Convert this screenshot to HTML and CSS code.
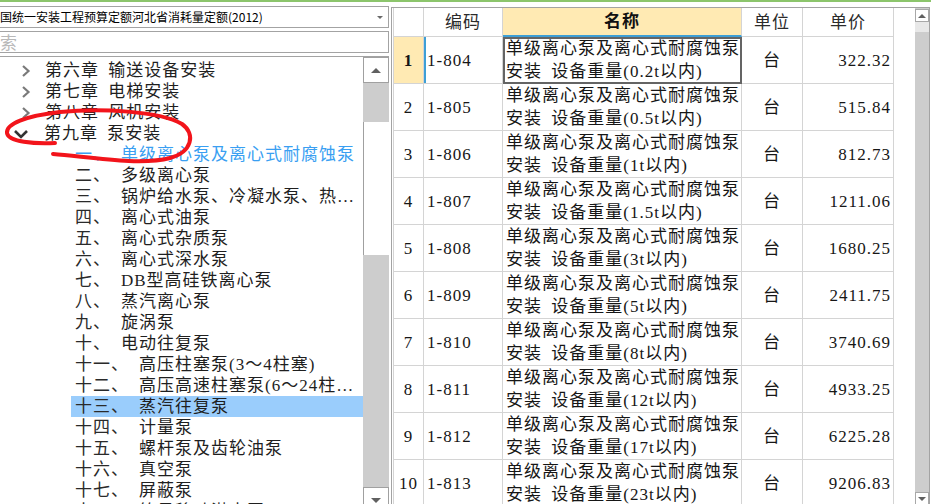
FILE: index.html
```html
<!DOCTYPE html>
<html lang="zh-CN">
<head>
<meta charset="utf-8">
<title>定额库</title>
<link rel="stylesheet" href="styles.css">
</head>
<body>
<div class="topline"></div>
<div class="main">
  <div class="left">
    <div class="combo">
      <span class="combo-text">国统一安装工程预算定额河北省消耗量定额(2012)</span>
      <i class="combo-arrow"></i>
    </div>
    <div class="search"><span class="placeholder">索</span></div>
    <div class="tree">
      <div class="tree-list">
        <div class="node chapter"><svg class="chev" width="10" height="12" viewBox="0 0 10 12"><polyline points="2,1 7.5,6 2,11" fill="none" stroke="#7a7a7a" stroke-width="2.2"/></svg><span class="label">第六章 输送设备安装</span></div>
        <div class="node chapter"><svg class="chev" width="10" height="12" viewBox="0 0 10 12"><polyline points="2,1 7.5,6 2,11" fill="none" stroke="#7a7a7a" stroke-width="2.2"/></svg><span class="label">第七章 电梯安装</span></div>
        <div class="node chapter"><svg class="chev" width="10" height="12" viewBox="0 0 10 12"><polyline points="2,1 7.5,6 2,11" fill="none" stroke="#7a7a7a" stroke-width="2.2"/></svg><span class="label">第八章 风机安装</span></div>
        <div class="node chapter open"><svg class="chev-down" width="16" height="10" viewBox="0 0 16 10"><polyline points="2,2 8,8 14,2" fill="none" stroke="#333" stroke-width="2.6"/></svg><span class="label">第九章 泵安装</span></div>
        <div class="node item cur"><span class="num">一、</span><span class="name">单级离心泵及离心式耐腐蚀泵</span></div>
        <div class="node item"><span class="num">二、</span><span class="name">多级离心泵</span></div>
        <div class="node item"><span class="num">三、</span><span class="name">锅炉给水泵、冷凝水泵、热水循环泵</span></div>
        <div class="node item"><span class="num">四、</span><span class="name">离心式油泵</span></div>
        <div class="node item"><span class="num">五、</span><span class="name">离心式杂质泵</span></div>
        <div class="node item"><span class="num">六、</span><span class="name">离心式深水泵</span></div>
        <div class="node item"><span class="num">七、</span><span class="name">DB型高硅铁离心泵</span></div>
        <div class="node item"><span class="num">八、</span><span class="name">蒸汽离心泵</span></div>
        <div class="node item"><span class="num">九、</span><span class="name">旋涡泵</span></div>
        <div class="node item"><span class="num">十、</span><span class="name">电动往复泵</span></div>
        <div class="node item"><span class="num">十一、</span><span class="name">高压柱塞泵(3～4柱塞)</span></div>
        <div class="node item"><span class="num">十二、</span><span class="name">高压高速柱塞泵(6～24柱塞)</span></div>
        <div class="node item sel"><span class="num">十三、</span><span class="name">蒸汽往复泵</span></div>
        <div class="node item"><span class="num">十四、</span><span class="name">计量泵</span></div>
        <div class="node item"><span class="num">十五、</span><span class="name">螺杆泵及齿轮油泵</span></div>
        <div class="node item"><span class="num">十六、</span><span class="name">真空泵</span></div>
        <div class="node item"><span class="num">十七、</span><span class="name">屏蔽泵</span></div>
        <div class="node item"><span class="num">十八、</span><span class="name">简易移动潜水泵</span></div>
      </div>
      <div class="vscroll">
        <div class="sb-btn sb-up"><i class="tri-up"></i></div>
        <div class="sb-thumb"></div>
        <div class="sb-btn sb-down"><i class="tri-down"></i></div>
      </div>
      <svg class="annotation" width="200" height="120" viewBox="0 56 200 120">
        <path d="M 55 143 C 35 144, 8 142, 7 133 C 6 124, 25 116, 60 112 C 100 108, 160 111, 182 124 C 196 134, 192 152, 170 158 C 140 166, 90 157, 53 154" fill="none" stroke="#f2141b" stroke-width="4" stroke-linecap="round" stroke-linejoin="round"/>
      </svg>
    </div>
  </div>

  <div class="right">
    <div class="table-area">
      <div class="grid">
        <div class="row head">
          <div class="cell c-no"></div>
          <div class="cell c-code">编码</div>
          <div class="cell c-name active">名称</div>
          <div class="cell c-unit">单位</div>
          <div class="cell c-price">单价</div>
        </div>
        <div class="row current">
          <div class="cell c-no">1</div>
          <div class="cell c-code">1-804</div>
          <div class="cell c-name"><span>单级离心泵及离心式耐腐蚀泵<br>安装 设备重量(0.2t以内)</span></div>
          <div class="cell c-unit">台</div>
          <div class="cell c-price">322.32</div>
        </div>
        <div class="row">
          <div class="cell c-no">2</div>
          <div class="cell c-code">1-805</div>
          <div class="cell c-name"><span>单级离心泵及离心式耐腐蚀泵<br>安装 设备重量(0.5t以内)</span></div>
          <div class="cell c-unit">台</div>
          <div class="cell c-price">515.84</div>
        </div>
        <div class="row">
          <div class="cell c-no">3</div>
          <div class="cell c-code">1-806</div>
          <div class="cell c-name"><span>单级离心泵及离心式耐腐蚀泵<br>安装 设备重量(1t以内)</span></div>
          <div class="cell c-unit">台</div>
          <div class="cell c-price">812.73</div>
        </div>
        <div class="row">
          <div class="cell c-no">4</div>
          <div class="cell c-code">1-807</div>
          <div class="cell c-name"><span>单级离心泵及离心式耐腐蚀泵<br>安装 设备重量(1.5t以内)</span></div>
          <div class="cell c-unit">台</div>
          <div class="cell c-price">1211.06</div>
        </div>
        <div class="row">
          <div class="cell c-no">5</div>
          <div class="cell c-code">1-808</div>
          <div class="cell c-name"><span>单级离心泵及离心式耐腐蚀泵<br>安装 设备重量(3t以内)</span></div>
          <div class="cell c-unit">台</div>
          <div class="cell c-price">1680.25</div>
        </div>
        <div class="row">
          <div class="cell c-no">6</div>
          <div class="cell c-code">1-809</div>
          <div class="cell c-name"><span>单级离心泵及离心式耐腐蚀泵<br>安装 设备重量(5t以内)</span></div>
          <div class="cell c-unit">台</div>
          <div class="cell c-price">2411.75</div>
        </div>
        <div class="row">
          <div class="cell c-no">7</div>
          <div class="cell c-code">1-810</div>
          <div class="cell c-name"><span>单级离心泵及离心式耐腐蚀泵<br>安装 设备重量(8t以内)</span></div>
          <div class="cell c-unit">台</div>
          <div class="cell c-price">3740.69</div>
        </div>
        <div class="row">
          <div class="cell c-no">8</div>
          <div class="cell c-code">1-811</div>
          <div class="cell c-name"><span>单级离心泵及离心式耐腐蚀泵<br>安装 设备重量(12t以内)</span></div>
          <div class="cell c-unit">台</div>
          <div class="cell c-price">4933.25</div>
        </div>
        <div class="row">
          <div class="cell c-no">9</div>
          <div class="cell c-code">1-812</div>
          <div class="cell c-name"><span>单级离心泵及离心式耐腐蚀泵<br>安装 设备重量(17t以内)</span></div>
          <div class="cell c-unit">台</div>
          <div class="cell c-price">6225.28</div>
        </div>
        <div class="row">
          <div class="cell c-no">10</div>
          <div class="cell c-code">1-813</div>
          <div class="cell c-name"><span>单级离心泵及离心式耐腐蚀泵<br>安装 设备重量(23t以内)</span></div>
          <div class="cell c-unit">台</div>
          <div class="cell c-price">9206.83</div>
        </div>
      </div>
    </div>
    <div class="vscroll2">
      <div class="sb2-btn"><i class="tri2-up"></i></div>
      <div class="sb2-thumb"></div>
      <div class="sb2-btn sb2-down"><i class="tri2-down"></i></div>
    </div>
  </div>
</div>
</body>
</html>
```

FILE: styles.css
```css
html, body {
  margin: 0;
  padding: 0;
}
body {
  width: 931px;
  height: 504px;
  overflow: hidden;
  background: #ffffff;
  font-family: "Liberation Serif", "Noto Sans CJK SC", serif;
  color: #1c1c1c;
}
.topline {
  height: 2px;
  background: #8cc56c;
}
.main {
  display: flex;
  height: 502px;
}

/* ---------- left panel ---------- */
.left {
  width: 389px;
  flex: none;
  display: flex;
  flex-direction: column;
  padding-top: 4px;
  box-sizing: border-box;
}
.combo {
  height: 22px;
  width: 391px;
  margin-left: -2px;
  box-sizing: border-box;
  border: 1px solid #a3a3a3;
  display: flex;
  align-items: center;
  padding-left: 1px;
  font-family: "Noto Sans CJK SC", sans-serif;
  font-size: 12px;
  color: #000;
  white-space: nowrap;
}
.combo-text {
  line-height: 20px;
}
.combo-arrow {
  margin-left: auto;
  margin-right: 5px;
  width: 0;
  height: 0;
  border-left: 3px solid transparent;
  border-right: 3px solid transparent;
  border-top: 3px solid #6a6a6a;
}
.search {
  height: 22px;
  width: 391px;
  margin-left: -2px;
  margin-top: 3px;
  box-sizing: border-box;
  border: 1px solid #a3a3a3;
  display: flex;
  align-items: center;
  padding-left: 1px;
}
.placeholder {
  font-family: "Noto Sans CJK SC", sans-serif;
  font-size: 17px;
  line-height: 20px;
  color: #b8b8b8;
}
.tree {
  flex: 1;
  min-height: 0;
  margin-top: 3px;
  border-top: 1px solid #a3a3a3;
  display: flex;
  position: relative;
  overflow: hidden;
}
.tree-list {
  flex: 1;
  min-width: 0;
  padding-top: 3px;
  overflow: hidden;
}
.node {
  height: 21px;
  line-height: 21px;
  font-size: 17px;
  letter-spacing: 1px;
  word-spacing: 4px;
  white-space: nowrap;
  color: #1f1f1f;
}
.chapter {
  display: flex;
  align-items: center;
  padding-left: 21px;
}
.chapter .label {
  margin-left: 14px;
}
.chapter.open {
  padding-left: 13px;
}
.chapter.open .label {
  margin-left: 15px;
}
.chev, .chev-down {
  flex: none;
  display: block;
}
.item {
  display: flex;
  margin-left: 71px;
  padding-left: 4px;
  padding-right: 7px;
}
.item .num {
  flex: none;
  color: #2a2a2a;
}
.item .name {
  margin-left: 10px;
  min-width: 0;
  overflow: hidden;
  text-overflow: ellipsis;
}
.item.cur {
  color: #3a9ff2;
}
.item.cur .num {
  color: #3a9ff2;
}
.item.sel {
  background: #9acdfc;
}
.vscroll {
  width: 26px;
  flex: none;
  background: #cdcdcd;
  display: flex;
  flex-direction: column;
}
.sb-btn {
  height: 26px;
  flex: none;
  box-sizing: border-box;
  background: #ffffff;
  border: 1px solid #a0a0a0;
  display: flex;
  align-items: center;
  justify-content: center;
}
.sb-down {
  margin-top: auto;
  margin-bottom: -9px;
  padding-bottom: 7px;
}
.tri-up {
  width: 0;
  height: 0;
  border-left: 5px solid transparent;
  border-right: 5px solid transparent;
  border-bottom: 5px solid #606060;
}
.tri-down {
  width: 0;
  height: 0;
  border-left: 5px solid transparent;
  border-right: 5px solid transparent;
  border-top: 5px solid #606060;
  margin-top: 8px;
}
.sb-thumb {
  height: 133px;
  margin-top: 39px;
  background: #ffffff;
  border-left: 1px solid #a0a0a0;
  flex: none;
}
.annotation {
  position: absolute;
  left: 0;
  top: -1px;
  pointer-events: none;
}

/* ---------- right panel ---------- */
.right {
  flex: 1;
  min-width: 0;
  margin-left: 2px;
  margin-right: 1px;
  margin-top: 5px;
  border: 1px solid #a3a3a3;
  border-bottom: none;
  display: flex;
  overflow: hidden;
}
.table-area {
  flex: 1;
  min-width: 0;
  padding-left: 1px;
  overflow: hidden;
}
.grid {
  display: flex;
  flex-direction: column;
}
.row {
  display: grid;
  grid-template-columns: 31px 79px 239px 61px 91px;
  height: 47px;
  flex: none;
}
.row.head {
  height: 29px;
}
.cell {
  box-sizing: border-box;
  border-right: 1px solid #d4d4d4;
  border-bottom: 1px solid #d4d4d4;
  font-size: 17px;
  letter-spacing: 1px;
  word-spacing: 4px;
  line-height: 23px;
  white-space: nowrap;
  display: flex;
  align-items: center;
  overflow: hidden;
  color: #161616;
}
.c-no {
  border-left: 1px solid #d4d4d4;
  justify-content: center;
}
.c-code {
  padding-left: 3px;
}
.c-name {
  padding-left: 3px;
}
.c-unit {
  justify-content: center;
}
.c-price {
  justify-content: flex-end;
  padding-right: 2px;
}
.head .cell {
  justify-content: center;
  padding: 0;
  color: #2b2b2b;
}
.head .c-name.active {
  background: #ffeab3;
  font-weight: bold;
  border-bottom: 2px solid #3d9fd6;
  color: #111;
}
.current .c-no {
  background: #ffeab3;
  font-weight: bold;
}
.current .c-code {
  box-shadow: inset 2px 0 0 #3d9fd6;
}
.current .c-name {
  outline: 2px solid #646464;
  outline-offset: -2px;
}
.vscroll2 {
  width: 14px;
  flex: none;
  background: #cdcdcd;
  display: flex;
  flex-direction: column;
  padding-top: 1px;
}
.sb2-btn {
  height: 13px;
  flex: none;
  box-sizing: border-box;
  background: #ffffff;
  border: 1px solid #a8a8a8;
  display: flex;
  align-items: center;
  justify-content: center;
}
.sb2-down {
  margin-top: auto;
  margin-bottom: -1px;
}
.sb2-thumb {
  height: 10px;
  flex: none;
  background: #e8e8e8;
}
.tri2-up {
  width: 0;
  height: 0;
  border-left: 4px solid transparent;
  border-right: 4px solid transparent;
  border-bottom: 4px solid #606060;
}
.tri2-down {
  width: 0;
  height: 0;
  border-left: 4px solid transparent;
  border-right: 4px solid transparent;
  border-top: 4px solid #606060;
}
```
